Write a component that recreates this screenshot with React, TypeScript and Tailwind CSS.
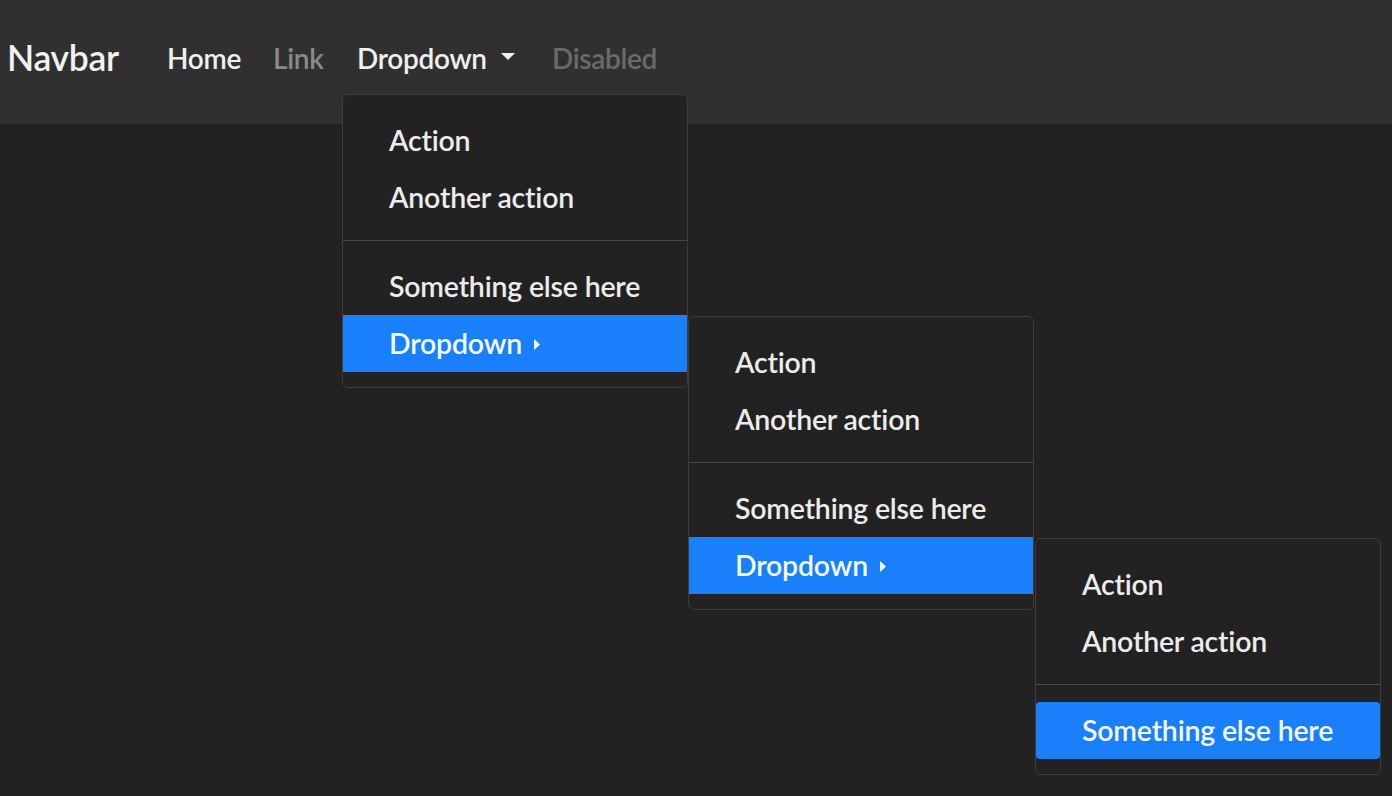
import React from "react";

const font = { fontFamily: "Lato, 'Noto Sans', sans-serif" };

function RightCaret() {
  return (
    <svg width="6" height="11" viewBox="0 0 6 11" className="ml-[12px] inline-block mt-[2px]">
      <path d="M0 0 L6 5.5 L0 11 Z" fill="currentColor" />
    </svg>
  );
}

function Item({ children, active, rounded }: { children: React.ReactNode; active?: boolean; rounded?: boolean }) {
  return (
    <div
      className={
        "h-[57px] flex items-center pl-[46px] pr-6 text-[28.5px] font-semibold tracking-[-0.2px] whitespace-nowrap " +
        (active ? "bg-[#1a7ffb] text-[#f4f8ff] " : "text-[#ececec] ") +
        (rounded ? "rounded-[4px]" : "")
      }
    >
      {children}
    </div>
  );
}

function Menu({ children, className }: { children: React.ReactNode; className: string }) {
  return (
    <div className={"absolute w-[346px] bg-[#222222] border border-[#3d3d3d] rounded-[6px] pt-[17px] z-10 " + className}>
      {children}
    </div>
  );
}

function Divider() {
  return <div className="mt-[14px] mb-[17px] h-px bg-[#474747]" />;
}

export default function App() {
  return (
    <div className="w-[1392px] h-[796px] bg-[#222222] overflow-hidden" style={font}>
      <nav className="h-[124px] bg-[#303030] flex items-center">
        <div className="pl-[7px] w-[167px] text-[35.5px] text-[#f2f2f2] font-semibold tracking-[-0.3px] -mt-[8px]">Navbar</div>
        <div className="flex items-center -mt-[8px] text-[28px] font-semibold tracking-[-0.3px]">
          <div className="text-[#f0f0f0] w-[106px]">Home</div>
          <div className="w-[84px] text-[#8a8a8a]">Link</div>
          <div className="relative w-[195px] text-[#f0f0f0] flex items-center">
            Dropdown
            <svg width="14" height="7" viewBox="0 0 14 7" className="ml-[14px] -mt-[4px]">
              <path d="M0 0 L14 0 L7 7 Z" fill="currentColor" />
            </svg>
            <Menu className="left-[-15px] top-[57px] pb-[15px]">
              <Item>Action</Item>
              <Item>Another action</Item>
              <Divider />
              <Item>Something else here</Item>
              <div className="relative">
                <Item active>
                  Dropdown
                  <RightCaret />
                </Item>
                <Menu className="left-[345px] top-[1px] pb-[15px]">
                  <Item>Action</Item>
                  <Item>Another action</Item>
                  <Divider />
                  <Item>Something else here</Item>
                  <div className="relative">
                    <Item active>
                      Dropdown
                      <RightCaret />
                    </Item>
                    <Menu className="left-[346px] top-[1px] pb-[15px]">
                      <Item>Action</Item>
                      <Item>Another action</Item>
                      <Divider />
                      <Item active rounded>
                        Something else here
                      </Item>
                    </Menu>
                  </div>
                </Menu>
              </div>
            </Menu>
          </div>
          <div className="text-[#6a6a6a]">Disabled</div>
        </div>
      </nav>
    </div>
  );
}
